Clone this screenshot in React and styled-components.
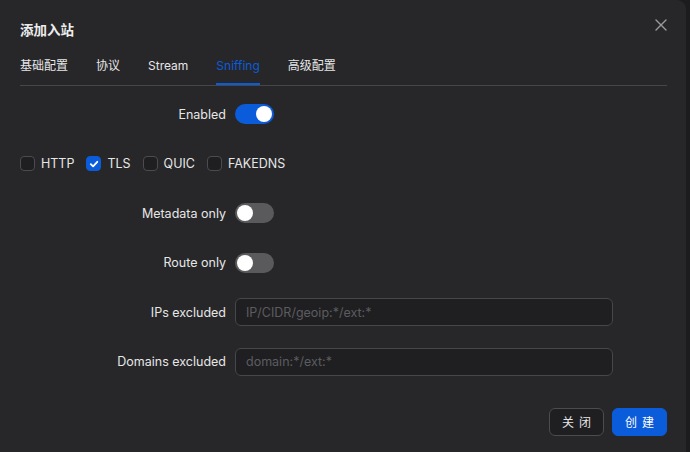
import React, {useState} from 'react';
import styled, {createGlobalStyle, css} from 'styled-components';

const GlobalStyle = createGlobalStyle`
    html, body {
        margin: 0;
        padding: 0;
        background: #1c1c1e;
    }
    body {
        font-family: Inter, "Noto Sans CJK SC", "Noto Sans", sans-serif;
        color: #e6e6e6;
        -webkit-font-smoothing: antialiased;
    }
`

const blue = '#0b5cdb';

const Page = styled.div`
    width: 690px;
    height: 452px;
    overflow: hidden;
    display: flex;
`

const Modal = styled.div`
    width: 686px;
    height: 470px;
    background: #27272a;
    border-top-right-radius: 9px;
    box-sizing: border-box;
    padding: 18px 19px 0 20px;
    display: flex;
    flex-direction: column;
`

const Header = styled.div`
    display: flex;
    justify-content: space-between;
    align-items: center;
    height: 22px;
`

const Title = styled.div`
    font-size: 13.5px;
    font-weight: 600;
    color: #ededed;
`

const CloseButton = styled.button`
    border: none;
    background: none;
    padding: 0;
    margin-right: -2px;
    margin-top: -9px;
    width: 16px;
    height: 16px;
    display: flex;
    align-items: center;
    justify-content: center;
    cursor: pointer;
`

const TabBar = styled.div`
    display: flex;
    gap: 28px;
    margin-top: 8px;
    border-bottom: 1px solid #45454a;
`

const Tab = styled.div`
    font-size: 12px;
    line-height: 18px;
    padding: 9px 0 10px;
    color: #e6e6e6;
    cursor: pointer;
    ${props => props.active && css`
        color: ${blue};
        box-shadow: inset 0 -2px 0 ${blue};
    `}
`

const Form = styled.div`
    display: flex;
    flex-direction: column;
    gap: 17.5px;
    margin-top: 12px;
`

const Row = styled.div`
    display: flex;
    align-items: center;
    height: 32px;
`

const Label = styled.div`
    width: 206px;
    text-align: right;
    margin-right: 9px;
    font-size: 12.5px;
    color: #e6e6e6;
`

const SwitchTrack = styled.div`
    width: 39px;
    height: 20px;
    border-radius: 10px;
    background: ${props => props.on ? blue : '#5a5a5d'};
    position: relative;
    cursor: pointer;
`

const SwitchKnob = styled.div`
    position: absolute;
    top: 2px;
    left: ${props => props.on ? '21px' : '2px'};
    width: 16px;
    height: 16px;
    border-radius: 50%;
    background: #fff;
`

const CheckGroup = styled.div`
    display: flex;
    align-items: center;
    height: 32px;
`

const CheckItem = styled.label`
    display: flex;
    align-items: center;
    gap: 6px;
    margin-right: 12px;
    font-size: 12.5px;
    color: #e6e6e6;
    cursor: pointer;
`

const Box = styled.span`
    width: 13px;
    height: 13px;
    border-radius: 4px;
    border: 1px solid #4b4b50;
    background: #1f1f21;
    display: flex;
    align-items: center;
    justify-content: center;
    ${props => props.checked && css`
        background: ${blue};
        border-color: ${blue};
    `}
`

const Input = styled.input`
    width: 378px;
    height: 28px;
    box-sizing: border-box;
    border: 1px solid #46464b;
    border-radius: 6px;
    background: #1f1f21;
    padding: 0 10px;
    font-family: inherit;
    font-size: 12.5px;
    color: #e6e6e6;
    outline: none;
    &::placeholder {
        color: #5c5c60;
    }
`

const Footer = styled.div`
    display: flex;
    justify-content: flex-end;
    gap: 8px;
    margin-top: 30px;
`

const Button = styled.button`
    width: 55px;
    height: 28px;
    padding: 0;
    border-radius: 6px;
    font-family: inherit;
    font-size: 12px;
    white-space: nowrap;
    letter-spacing: 5px;
    text-indent: 5px;
    cursor: pointer;
    border: 1px solid #4b4b50;
    background: #1f1f21;
    color: #e6e6e6;
    ${props => props.primary && css`
        border-color: ${blue};
        background: ${blue};
        color: #fff;
    `}
`

function Switch({on, onClick}) {
    return (
        <SwitchTrack on={on} onClick={onClick}>
            <SwitchKnob on={on}/>
        </SwitchTrack>
    )
}

function Check({label, checked, onClick}) {
    return (
        <CheckItem onClick={onClick}>
            <Box checked={checked}>
                {checked &&
                    <svg width="10" height="10" viewBox="0 0 10 10">
                        <path d="M1.8 5.2 L4.1 7.4 L8.3 2.8" fill="none" stroke="#fff" strokeWidth="1.8" strokeLinecap="round" strokeLinejoin="round"/>
                    </svg>
                }
            </Box>
            {label}
        </CheckItem>
    )
}

const tabs = ['基础配置', '协议', 'Stream', 'Sniffing', '高级配置'];
const protocols = ['HTTP', 'TLS', 'QUIC', 'FAKEDNS'];

export default function App() {
    const [enabled, setEnabled] = useState(true);
    const [metadataOnly, setMetadataOnly] = useState(false);
    const [routeOnly, setRouteOnly] = useState(false);
    const [sniffed, setSniffed] = useState({TLS: true});

    return (
        <Page>
            <GlobalStyle/>
            <Modal>
                <Header>
                    <Title>添加入站</Title>
                    <CloseButton>
                        <svg width="12" height="12" viewBox="0 0 12 12">
                            <path d="M1 1 L11 11 M11 1 L1 11" stroke="#9b9b9f" strokeWidth="1.4" strokeLinecap="round"/>
                        </svg>
                    </CloseButton>
                </Header>
                <TabBar>
                    {tabs.map(t => <Tab key={t} active={t === 'Sniffing'}>{t}</Tab>)}
                </TabBar>
                <Form>
                    <Row>
                        <Label>Enabled</Label>
                        <Switch on={enabled} onClick={() => setEnabled(!enabled)}/>
                    </Row>
                    <CheckGroup>
                        {protocols.map(p =>
                            <Check
                                key={p}
                                label={p}
                                checked={!!sniffed[p]}
                                onClick={() => setSniffed({...sniffed, [p]: !sniffed[p]})}
                            />
                        )}
                    </CheckGroup>
                    <Row>
                        <Label>Metadata only</Label>
                        <Switch on={metadataOnly} onClick={() => setMetadataOnly(!metadataOnly)}/>
                    </Row>
                    <Row>
                        <Label>Route only</Label>
                        <Switch on={routeOnly} onClick={() => setRouteOnly(!routeOnly)}/>
                    </Row>
                    <Row>
                        <Label>IPs excluded</Label>
                        <Input placeholder="IP/CIDR/geoip:*/ext:*"/>
                    </Row>
                    <Row>
                        <Label>Domains excluded</Label>
                        <Input placeholder="domain:*/ext:*"/>
                    </Row>
                </Form>
                <Footer>
                    <Button>关闭</Button>
                    <Button primary>创建</Button>
                </Footer>
            </Modal>
        </Page>
    )
}
